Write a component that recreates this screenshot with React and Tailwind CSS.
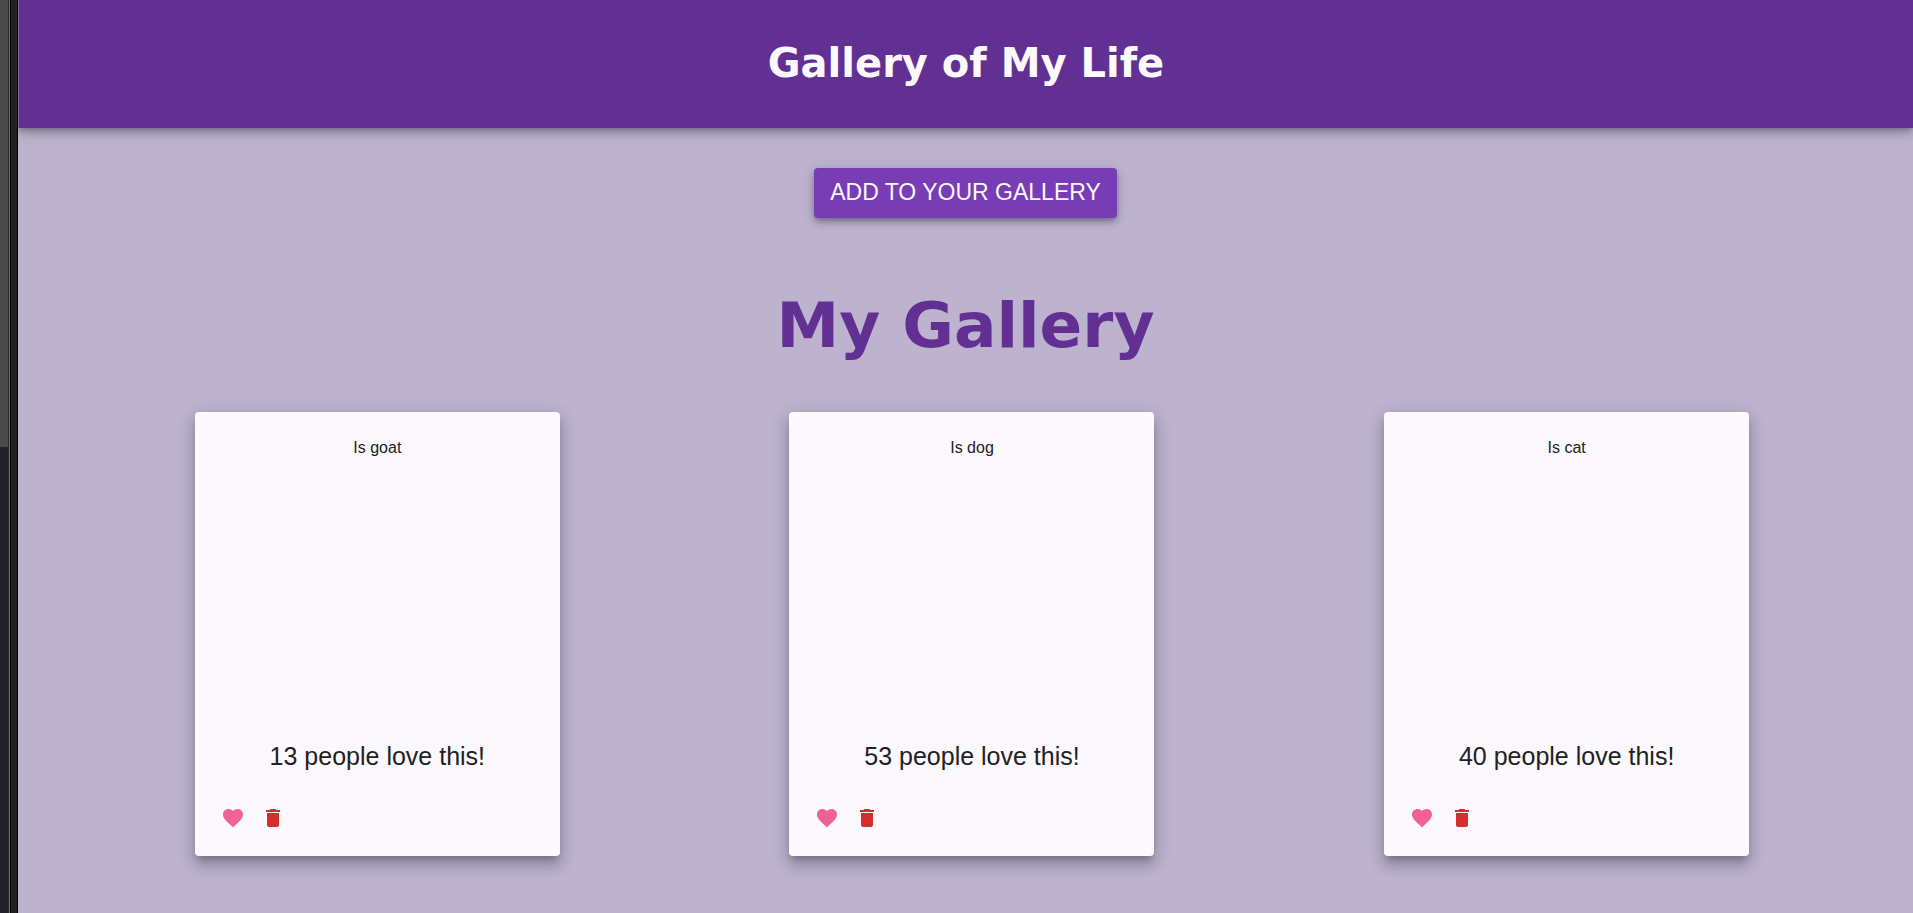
import { MdDelete, MdFavorite } from "react-icons/md";

const items = [
  { id: 1, description: "Is goat", likes: 13 },
  { id: 2, description: "Is dog", likes: 53 },
  { id: 3, description: "Is cat", likes: 40 },
];

function WindowEdge() {
  return (
    <div className="flex shrink-0" aria-hidden="true">
      <div className="flex w-2 flex-col bg-[#232028]">
        <div className="h-[49vh] bg-[#4a4a4a]" />
      </div>
      <div className="w-px bg-[#2b2b29]" />
      <div className="w-px bg-[#8c5454]" />
      <div className="w-px bg-black" />
      <div className="w-1.5 bg-[#20211f]" />
      <div className="w-px bg-black" />
    </div>
  );
}

function GalleryItem({ item }) {
  return (
    <article className="flex min-h-[444px] w-full max-w-[365px] flex-col justify-between rounded-sm bg-[#fbf9fd] p-[18px] shadow-[0_6px_6px_-3px_rgba(0,0,0,0.2),0_10px_14px_1px_rgba(0,0,0,0.14),0_4px_18px_3px_rgba(0,0,0,0.12)]">
      <p className="pt-1.5 text-center text-base leading-6">{item.description}</p>
      <div>
        <p className="mb-[26px] text-center text-[25px] leading-8">
          {item.likes} people love this!
        </p>
        <div className="flex">
          <button type="button" aria-label="Love" className="p-2 text-[#f06292]">
            <MdFavorite size={24} />
          </button>
          <button type="button" aria-label="Delete" className="p-2 text-[#d32f2f]">
            <MdDelete size={24} />
          </button>
        </div>
      </div>
    </article>
  );
}

export default function App() {
  return (
    <div className="flex min-h-screen bg-[#bdb3cf] font-['Liberation_Sans',Arial,sans-serif] text-[#212121]">
      <WindowEdge />
      <div className="min-w-0 flex-1 overflow-hidden">
        <header className="flex h-32 items-center justify-center border-l border-[#8560a8] bg-[#613092] pb-0.5 shadow-[0_2px_5px_-1px_rgba(0,0,0,0.2),0_5px_8px_0_rgba(0,0,0,0.18),0_1px_18px_0_rgba(0,0,0,0.16)]">
          <h1 className="font-['DejaVu_Sans',Verdana,sans-serif] text-[40px] leading-none font-bold text-[#fbf9fd]">
            Gallery of My Life
          </h1>
        </header>
        <main className="flex flex-col items-center pt-10 pb-14">
          <button
            type="button"
            className="h-[50px] rounded-sm bg-[#783cb4] px-4 pb-0.5 text-[23px] text-[#fbf9fd] uppercase shadow-[0_3px_5px_-1px_rgba(0,0,0,0.24),0_5px_8px_0_rgba(0,0,0,0.16),0_1px_14px_0_rgba(0,0,0,0.12)]"
          >
            Add to your gallery
          </button>
          <h2 className="mt-[72px] font-['DejaVu_Sans',Verdana,sans-serif] text-[63px] leading-[72px] font-bold text-[#613092]">
            My Gallery
          </h2>
          <section className="mt-[50px] grid w-full grid-cols-3 justify-items-center pr-[49px] pl-[62px]">
            {items.map((item) => (
              <GalleryItem key={item.id} item={item} />
            ))}
          </section>
        </main>
      </div>
    </div>
  );
}
